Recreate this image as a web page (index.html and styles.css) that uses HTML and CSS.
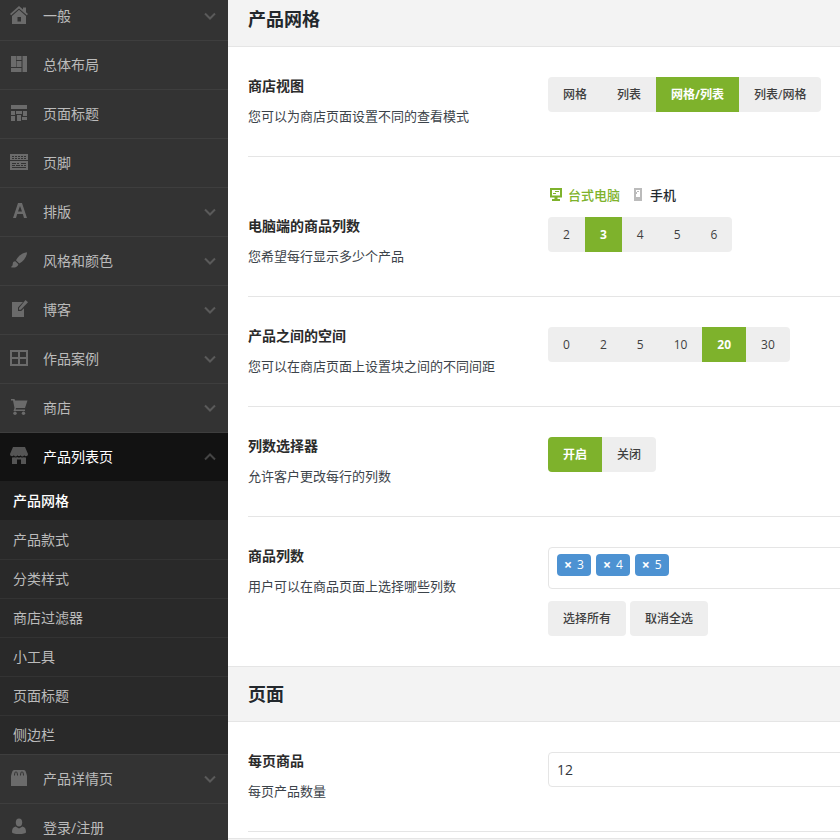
FILE: index.html
```html
<!DOCTYPE html>
<html lang="zh-CN">
<head>
  <meta charset="UTF-8">
  <meta name="viewport" content="width=device-width, initial-scale=1.0">
  <title>产品网格</title>
  <link rel="stylesheet" href="styles.css">
</head>
<body>
  <div class="layout">
    <nav class="sidebar">
      <ul class="menu">
        <li>
          <a href="#">
            <svg class="icon" viewBox="0 0 18 18"><path d="M9 0 0 8l1.200 1.300L9 2.400l7.800 6.900L18 8l-2-1.800V1.500h-3v2z"/><path fill-rule="evenodd" d="M9 3.800 2 10V18h14v-8zM7.500 11h3.500v4.500H7.500z"/></svg>
            <span>一般</span>
            <svg class="arrow" viewBox="0 0 12 8"><path d="M1 1.500l5 5 5-5"/></svg>
          </a>
        </li>
        <li>
          <a href="#">
            <svg class="icon" viewBox="0 0 18 18"><path d="M1 1h5v11H1zM6.500 1h5v4h-5zM6.500 6h5v6h-5zM12.500 1H17v16h-4.500zM1 13h10.500v4H1z"/></svg>
            <span>总体布局</span>
          </a>
        </li>
        <li>
          <a href="#">
            <svg class="icon" viewBox="0 0 18 18"><path d="M1 1h16v4H1zM1 7h4v4H1zM6 7h6v3H6zM13 7h4v5h-4zM1 12h4v5H1zM7 11h4v6H7zM12 13h5v3h-5z"/></svg>
            <span>页面标题</span>
          </a>
        </li>
        <li>
          <a href="#">
            <svg class="icon" viewBox="0 0 18 18"><path fill-rule="evenodd" d="M0 1h18v6H0zM2 3h2v1H2zM5 3h2v1H5zM8 3h2v1H8zM11 3h2v1h-2zM14 3h2v1h-2zM2 5h2v1H2zM5 5h2v1H5zM8 5h2v1H8zM11 5h2v1h-2zM14 5h2v1h-2zM0 8h18v9H0zM2 10h4v1H2zM7 10h2v1H7zM11 10h5v1h-5zM2 12h3v1H2zM6 12h4v1H6zM11 12h2v1h-2zM14 12h2v1h-2zM2 14h14v1H2z"/></svg>
            <span>页脚</span>
          </a>
        </li>
        <li>
          <a href="#">
            <svg class="icon" viewBox="0 0 18 18"><path fill-rule="evenodd" d="M8 1h4l5 15h-3l-1.200-4H7.200L6 16H3zM10 4 8 9.500h4z"/></svg>
            <span>排版</span>
            <svg class="arrow" viewBox="0 0 12 8"><path d="M1 1.500l5 5 5-5"/></svg>
          </a>
        </li>
        <li>
          <a href="#">
            <svg class="icon" viewBox="0 0 18 18"><path d="M17 1.200C12 2 8 5 6 9.300l3.300 3.200C13.500 10 17 6 17 1.200z"/><path d="M5.300 10.200c-2 0-2.500 1.300-2.600 3-.1 1.300-.7 2.300-2 2.800 2.800 1.300 7 .3 7.700-2.800z"/></svg>
            <span>风格和颜色</span>
            <svg class="arrow" viewBox="0 0 12 8"><path d="M1 1.500l5 5 5-5"/></svg>
          </a>
        </li>
        <li>
          <a href="#">
            <svg class="icon" viewBox="0 0 18 18"><path d="M2 2h11L8 7.500V11h3.200L14 8.200V17H2z"/><path d="M15.500 0 18 2.300l-7.200 7.500H9V8z"/></svg>
            <span>博客</span>
            <svg class="arrow" viewBox="0 0 12 8"><path d="M1 1.500l5 5 5-5"/></svg>
          </a>
        </li>
        <li>
          <a href="#">
            <svg class="icon" viewBox="0 0 18 18"><path fill-rule="evenodd" d="M0 1h18v16H0zM2 3v5h6V3zM10 3v5h6V3zM2 10v5h6v-5zM10 10v5h6v-5z"/></svg>
            <span>作品案例</span>
            <svg class="arrow" viewBox="0 0 12 8"><path d="M1 1.500l5 5 5-5"/></svg>
          </a>
        </li>
        <li>
          <a href="#">
            <svg class="icon" viewBox="0 0 18 18"><path d="M1 1h3.500l.6 1.500H17.500L15 10H6l-.4 1.500H15V13H3.500l1-3L3 2.500H1z"/><circle cx="5" cy="15.300" r="1.700"/><circle cx="13.500" cy="15.300" r="1.700"/></svg>
            <span>商店</span>
            <svg class="arrow" viewBox="0 0 12 8"><path d="M1 1.500l5 5 5-5"/></svg>
          </a>
        </li>
        <li class="open">
          <a href="#">
            <svg class="icon" viewBox="0 0 18 18"><path d="M3 0h12l3 7c0 2.600-3 2.800-3.800 1.200-.9 1.600-2.800 1.600-3.600 0-.7 1.200-2.500 1.200-3.200 0-.8 1.600-2.700 1.600-3.600 0C3 9.800 0 9.600 0 7z"/><path d="M2 10.500c1 .2 1.500 0 2-.5 1 .8 2.200.8 3.200 0 1 .8 2.500.8 3.500 0 1 .8 2.300.8 3.300 0 .5.500 1 .7 2 .5V17h-5v-4.500H7V17H2z"/></svg>
            <span>产品列表页</span>
            <svg class="arrow" viewBox="0 0 12 8"><path d="M1 6.500l5-5 5 5"/></svg>
          </a>
          <ul class="submenu">
            <li class="current"><a href="#">产品网格</a></li>
            <li><a href="#">产品款式</a></li>
            <li><a href="#">分类样式</a></li>
            <li><a href="#">商店过滤器</a></li>
            <li><a href="#">小工具</a></li>
            <li><a href="#">页面标题</a></li>
            <li><a href="#">侧边栏</a></li>
          </ul>
        </li>
        <li>
          <a href="#">
            <svg class="icon" viewBox="0 0 18 18"><path d="M4 1h10c1.500 0 2.300 3 3 6v10H1V7c.7-3 1.500-6 3-6z"/><path class="cut" d="M4.500 6.500C4.500 1.500 7.500 1.500 7.500 6.500M10.500 6.500c0-5 3-5 3 0"/></svg>
            <span>产品详情页</span>
            <svg class="arrow" viewBox="0 0 12 8"><path d="M1 1.500l5 5 5-5"/></svg>
          </a>
        </li>
        <li>
          <a href="#">
            <svg class="icon" viewBox="0 0 18 18"><ellipse cx="9" cy="4.500" rx="3.200" ry="4"/><path d="M5.500 8.500 9 10.500l3.500-2c2.500.5 3.500 2.500 3.500 5.500 0 1.500-3 2-7 2s-7-.5-7-2c0-3 1-5 3.500-5.500z"/></svg>
            <span>登录/注册</span>
          </a>
        </li>
      </ul>
    </nav>

    <main class="content">
      <form class="panel">
        <h2>产品网格</h2>

        <div class="field">
          <div class="info">
            <h3>商店视图</h3>
            <p>您可以为商店页面设置不同的查看模式</p>
          </div>
          <div class="control">
            <div class="btn-set">
              <button type="button">网格</button>
              <button type="button">列表</button>
              <button type="button" class="active">网格/列表</button>
              <button type="button">列表/网格</button>
            </div>
          </div>
        </div>

        <div class="field has-devices">
          <div class="info">
            <h3>电脑端的商品列数</h3>
            <p>您希望每行显示多少个产品</p>
          </div>
          <div class="control">
            <div class="devices">
              <button type="button" class="active">
                <svg viewBox="0 0 14 14"><path fill-rule="evenodd" d="M1 0h12v9.500H8.500V11H11v2H3v-2h2.500V9.500H1zM3 2v5.500h8V2z"/><path d="M4 5h3v1H4zM6 3h4v1H6z"/></svg>
                台式电脑
              </button>
              <button type="button">
                <svg viewBox="0 0 14 14"><path fill-rule="evenodd" d="M3 0h8v13H3zM5 2v7h4V2z"/><path d="M6 3h2v1H6zM5 4h1v2H5z"/></svg>
                手机
              </button>
            </div>
            <div class="btn-set">
              <button type="button">2</button>
              <button type="button" class="active">3</button>
              <button type="button">4</button>
              <button type="button">5</button>
              <button type="button">6</button>
            </div>
          </div>
        </div>

        <div class="field">
          <div class="info">
            <h3>产品之间的空间</h3>
            <p>您可以在商店页面上设置块之间的不同间距</p>
          </div>
          <div class="control">
            <div class="btn-set">
              <button type="button">0</button>
              <button type="button">2</button>
              <button type="button">5</button>
              <button type="button">10</button>
              <button type="button" class="active">20</button>
              <button type="button">30</button>
            </div>
          </div>
        </div>

        <div class="field">
          <div class="info">
            <h3>列数选择器</h3>
            <p>允许客户更改每行的列数</p>
          </div>
          <div class="control">
            <div class="btn-set">
              <button type="button" class="active">开启</button>
              <button type="button">关闭</button>
            </div>
          </div>
        </div>

        <div class="field">
          <div class="info">
            <h3>商品列数</h3>
            <p>用户可以在商品页面上选择哪些列数</p>
          </div>
          <div class="control">
            <ul class="tags">
              <li><button type="button">×</button>3</li>
              <li><button type="button">×</button>4</li>
              <li><button type="button">×</button>5</li>
            </ul>
            <div class="actions">
              <button type="button">选择所有</button>
              <button type="button">取消全选</button>
            </div>
          </div>
        </div>

        <h2>页面</h2>

        <div class="field">
          <div class="info">
            <h3><label for="per_page">每页商品</label></h3>
            <p>每页产品数量</p>
          </div>
          <div class="control">
            <input type="text" id="per_page" name="per_page" value="12">
          </div>
        </div>
      </form>
    </main>
  </div>
</body>
</html>
```
FILE: styles.css
```css
* {
  box-sizing: border-box;
}
body {
  margin: 0;
  font-family: "Open Sans", "Noto Sans CJK SC", sans-serif;
  font-size: 13px;
  color: #3c434a;
  background-color: #f3f3f3;
}
ul, h2, h3, p {
  margin: 0;
  padding: 0;
}
ul {
  list-style: none;
}
a {
  text-decoration: none;
}
button, input {
  font-family: inherit;
}
button {
  border: none;
  cursor: pointer;
}

.layout {
  display: flex;
  height: 100vh;
  overflow: hidden;
}

.sidebar {
  flex: 0 0 228px;
  margin-top: -9px;
  background-color: #333;
}
.menu > li > a {
  display: flex;
  align-items: center;
  height: 49px;
  padding: 0 12px 0 10px;
  border-top: 1px solid #3e3e3e;
  color: #bbb;
  font-size: 14px;
  line-height: 20px;
}
.menu span {
  flex: 1;
}
.icon {
  width: 18px;
  height: 18px;
  margin-right: 15px;
  margin-bottom: 2px;
  fill: #6b6b6b;
}
.icon .cut {
  fill: none;
  stroke: #333;
}
.arrow {
  width: 12px;
  height: 8px;
  fill: none;
  stroke: #5a5a5a;
  stroke-width: 2;
}
.menu > .open > a {
  background-color: #121212;
  background-clip: padding-box;
  color: #fff;
}
.open .icon {
  fill: #555;
}
.open .arrow {
  stroke: #444;
}

.submenu {
  background-color: #292929;
}
.submenu a {
  display: block;
  height: 39px;
  padding: 0 13px;
  border-top: 1px solid #333;
  color: #bbb;
  font-size: 14px;
  line-height: 38px;
}
.submenu .current a {
  border-top-color: #1f1f1f;
  background-color: #1f1f1f;
  color: #fff;
  font-weight: 500;
}
.submenu .current + li a {
  border-top-color: #292929;
}

.content {
  flex: 1;
  min-width: 0;
  margin-top: -9px;
}
/* fields run past the right edge of the window */
.panel {
  margin-right: -40px;
  background-color: #fff;
  border-bottom: 1px solid #e5e5e5;
  padding-bottom: 6px;
}
.panel h2 {
  height: 56px;
  padding: 0 20px;
  border-top: 1px solid #e5e5e5;
  border-bottom: 1px solid #e5e5e5;
  background-color: #f3f3f3;
  color: #23282d;
  font-size: 18px;
  line-height: 55px;
}

.field {
  display: flex;
  margin: 0 20px;
  padding: 30px 0;
  border-bottom: 1px solid #e5e5e5;
}
.field:has(+ h2) {
  border-bottom: none;
}
.info {
  flex: 0 0 300px;
}
.has-devices .info {
  padding-top: 30px;
}
.info h3 {
  margin-bottom: 12px;
  color: #2b2b2b;
  font-size: 14px;
  line-height: 18px;
}
.info p {
  line-height: 18px;
}
.control {
  flex: 1;
  min-width: 0;
}

.btn-set {
  display: flex;
  width: fit-content;
  border-radius: 4px;
  overflow: hidden;
}
.field .control {
  min-height: 49px;
}
.btn-set button, .actions button {
  height: 35px;
  padding: 0 15px;
  background-color: #eee;
  color: #3f3f3f;
  font-size: 12px;
  font-weight: 500;
  line-height: 35px;
}
.has-devices .control {
  min-height: 79px;
}
.btn-set .active {
  background-color: #7eb22c;
  color: #fff;
  font-weight: bold;
}

.devices {
  display: flex;
  gap: 10px;
  margin-bottom: 14px;
}
.devices button {
  display: flex;
  align-items: center;
  gap: 5px;
  height: 16px;
  padding: 0;
  background: none;
  color: #23282d;
  font-size: 13px;
  font-weight: 500;
  line-height: 16px;
}
.devices svg {
  width: 14px;
  height: 14px;
  margin-left: 1px;
  fill: #bbb;
}
.devices .active {
  color: #7eb22c;
}
.devices .active svg {
  fill: #7eb22c;
}

.tags {
  display: flex;
  gap: 5px;
  height: 42px;
  padding: 6px 8px;
  border: 1px solid #e5e5e5;
  border-radius: 4px;
}
.tags li {
  display: flex;
  align-items: center;
  gap: 5px;
  height: 22px;
  padding: 0 7px;
  border-radius: 4px;
  background-color: #4d92d2;
  color: #fff;
  font-size: 12px;
  line-height: 22px;
}
.tags button {
  padding: 0;
  background: none;
  color: #fff;
  font-size: 14px;
  font-weight: bold;
  line-height: 22px;
}
.actions {
  display: flex;
  gap: 4px;
  margin-top: 12px;
}
.actions button {
  border-radius: 4px;
}

.control input {
  display: block;
  width: 100%;
  height: 35px;
  padding: 0 8px;
  border: 1px solid #e5e5e5;
  border-radius: 4px;
  color: #32373c;
  font-size: 14px;
}
```
